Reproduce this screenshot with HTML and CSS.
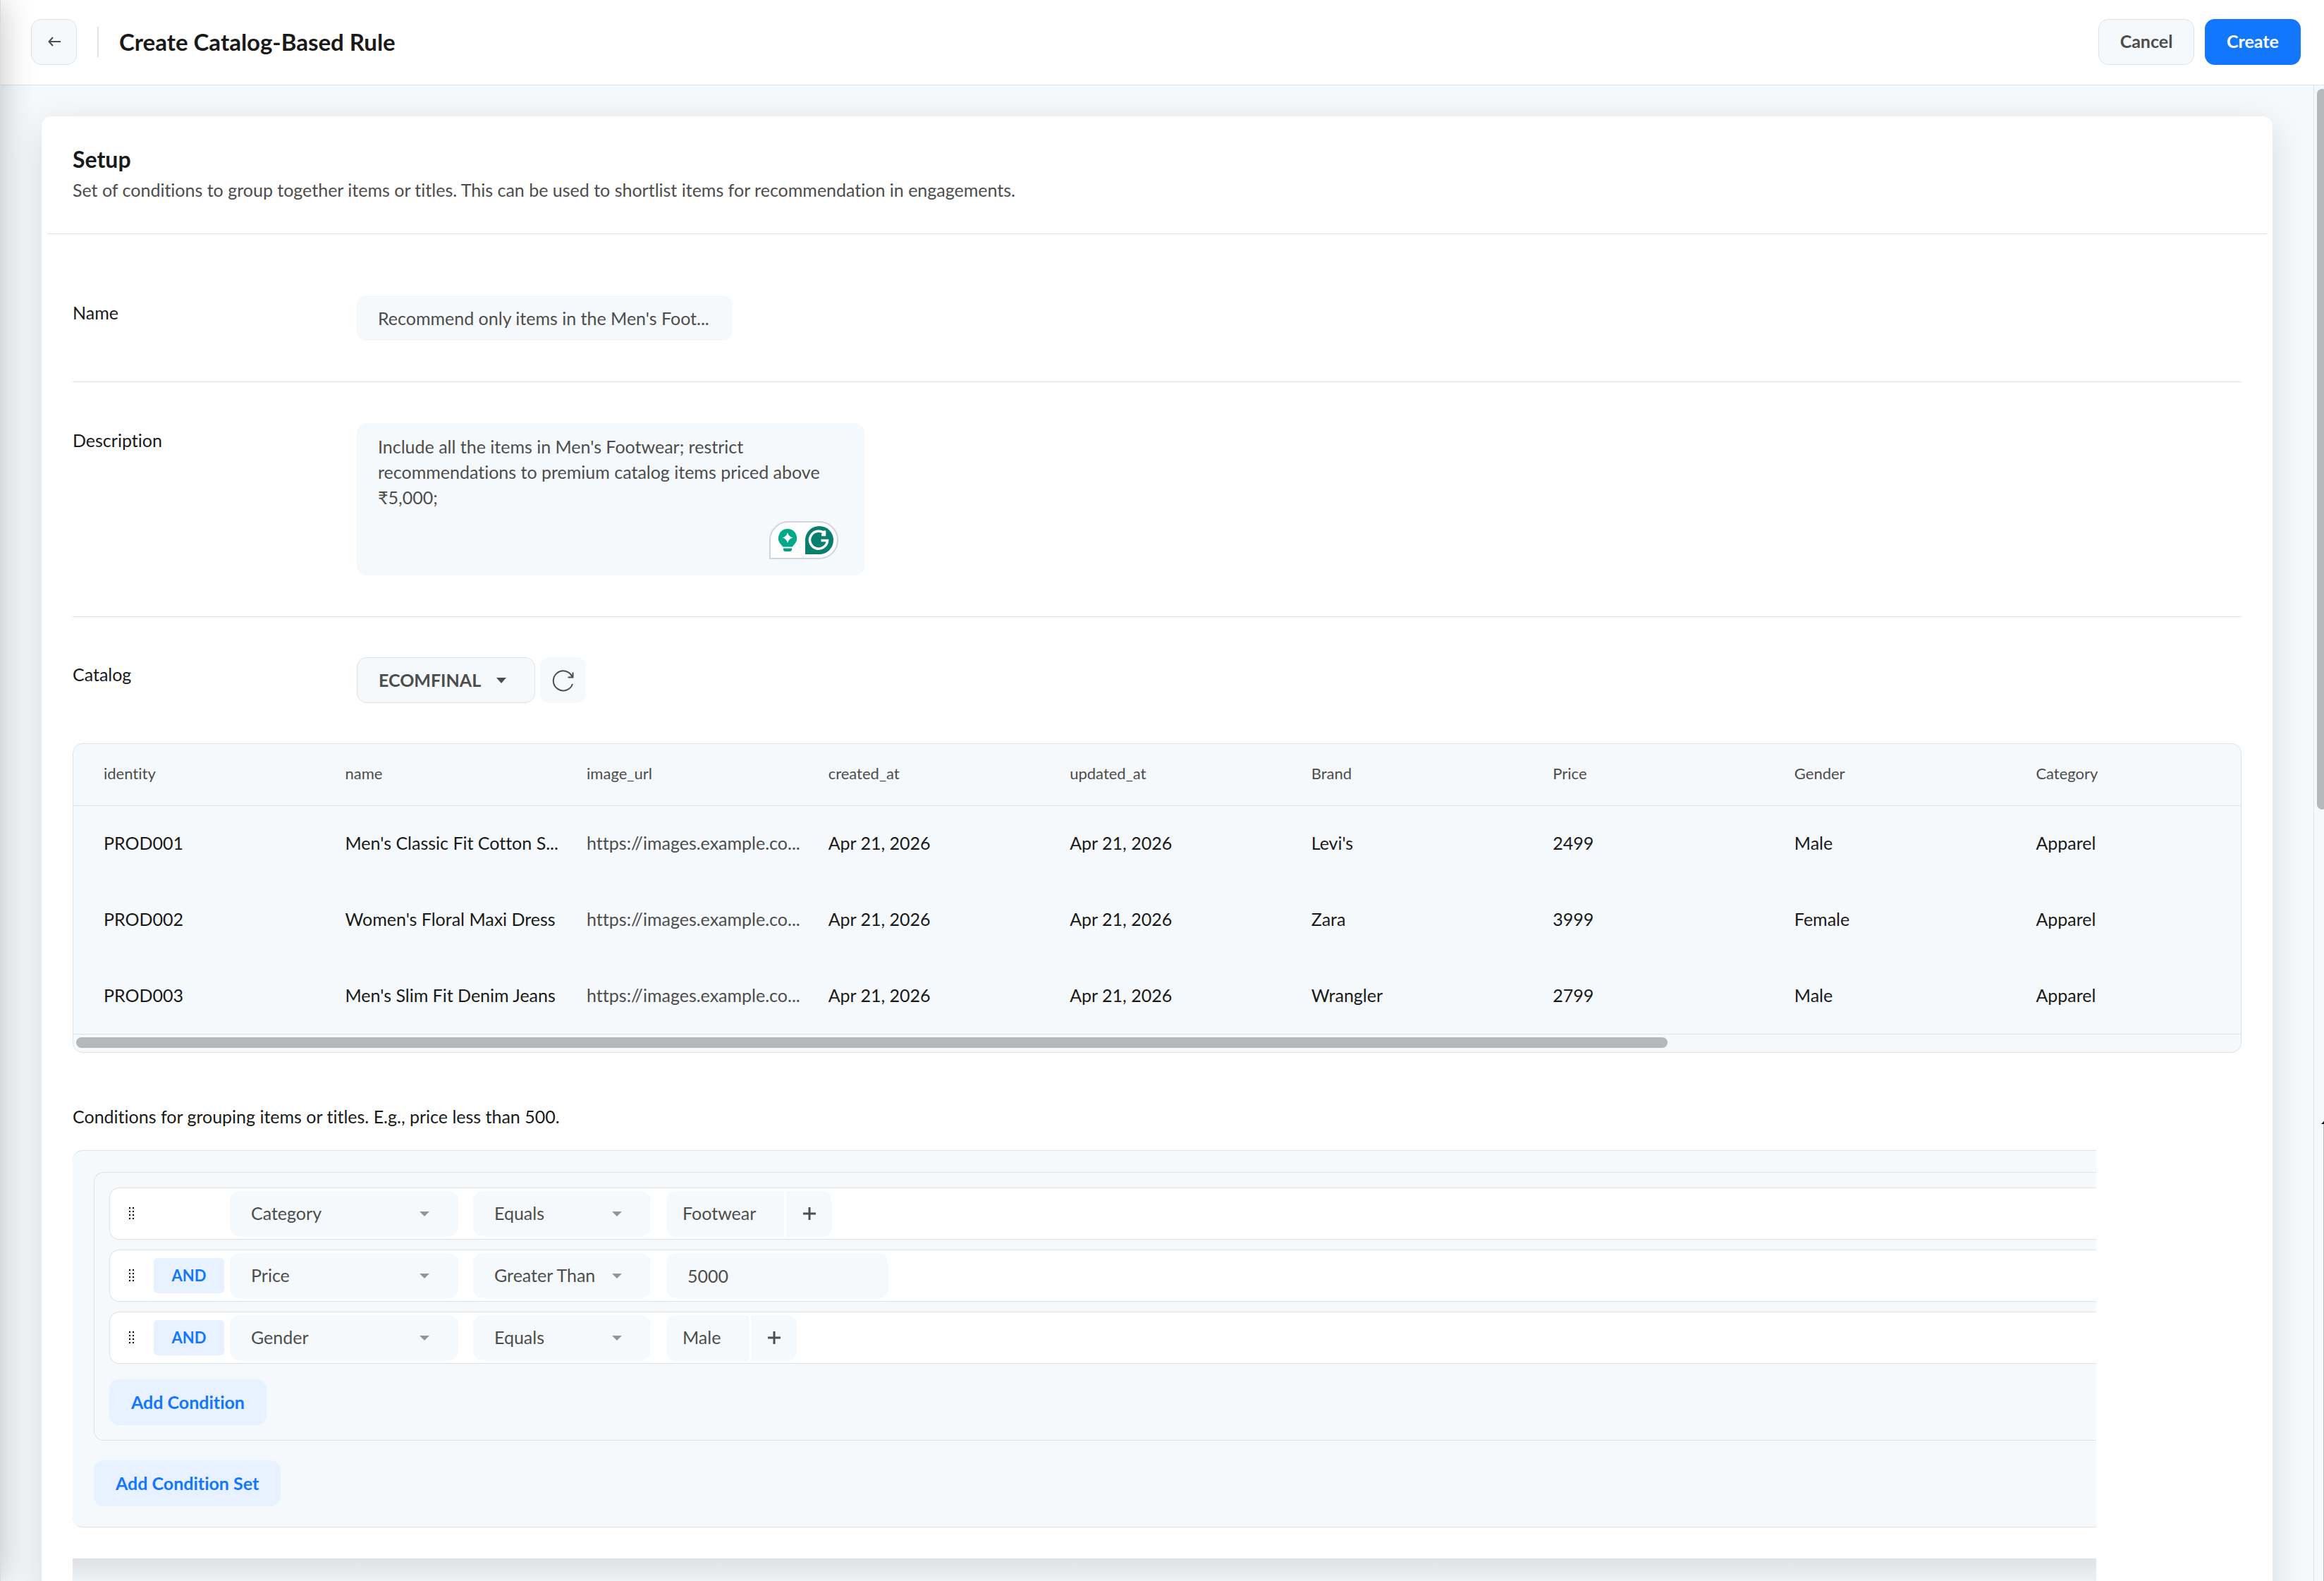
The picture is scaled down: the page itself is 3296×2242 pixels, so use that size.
FILE: index.html
```html
<!DOCTYPE html>
<html lang="en">
<head>
    <meta charset="UTF-8">
    <meta name="viewport" content="width=device-width, initial-scale=1.0">
    <title>Create Catalog-Based Rule</title>
    <link rel="stylesheet" href="styles.css">
</head>
<body>

    <header class="topbar">
        <button class="btn btn-icon btn-outline" type="button" aria-label="Back">
            <svg width="18" height="14" viewBox="0 0 18 14" fill="none" stroke="#4d4d4d" stroke-width="2"><path d="M18 7H1.500M7 1L1.500 7L7 13"/></svg>
        </button>
        <span class="topbar-divider"></span>
        <h1 class="topbar-title">Create Catalog-Based Rule</h1>
        <div class="topbar-actions">
            <button class="btn btn-outline" type="button">Cancel</button>
            <button class="btn btn-primary" type="button">Create</button>
        </div>
    </header>

    <div class="page">
        <main class="card">
            <div class="card-header">
                <h2 class="card-title">Setup</h2>
                <p class="card-subtitle">Set of conditions to group together items or titles. This can be used to shortlist items for recommendation in engagements.</p>
            </div>

            <div class="card-body">
                <div class="field">
                    <label class="field-label" for="rule-name">Name</label>
                    <input class="input name-input" id="rule-name" type="text" value="Recommend only items in the Men's Foot...">
                </div>

                <div class="field">
                    <label class="field-label" for="rule-description">Description</label>
                    <div class="textarea-wrap">
                        <textarea class="textarea" id="rule-description" spellcheck="false">Include all the items in Men's Footwear; restrict recommendations to premium catalog items priced above ₹5,000;</textarea>
                        <div class="assist-badge">
                            <svg width="28" height="34" viewBox="0 0 28 34">
                                <path fill="#00a88a" d="M14 1a13 13 0 0 0-9 22.400q1.500 1.600 2 3.100h14q.5-1.500 2-3.100A13 13 0 0 0 14 1z"/>
                                <path fill="#fff" d="M14 6q1.500 6 7.500 7.500Q15.500 15 14 21q-1.500-6-7.500-7.500Q12.500 12 14 6z"/>
                                <path fill="#0a9c80" d="M8 28.500h12v1.500q0 3-3 3h-6q-3 0-3-3z"/>
                            </svg>
                            <svg width="40" height="40" viewBox="0 0 40 40">
                                <path fill="#077f70" d="M20 0a20 20 0 0 1 0 40H0V20A20 20 0 0 1 20 0z"/>
                                <path fill="none" stroke="#fff" stroke-width="3.500" d="M28.500 11.500A12.500 12.500 0 1 0 31.500 20.500H22.500M27.500 6.500V12.500H23"/>
                            </svg>
                        </div>
                    </div>
                </div>

                <div class="field field-last">
                    <label class="field-label" for="catalog">Catalog</label>
                    <div class="catalog-controls">
                        <div class="select-wrap">
                            <select class="select catalog-select" id="catalog">
                                <option>ECOMFINAL</option>
                            </select>
                            <svg class="caret caret-dark" width="14" height="8" viewBox="0 0 14 8"><path d="M0 0h14L7 8z"/></svg>
                        </div>
                        <button class="btn btn-icon" type="button" aria-label="Refresh catalog">
                            <svg width="32" height="32" viewBox="0 0 32 32" fill="none" stroke="#4d4d4d" stroke-width="2"><path d="M29 21A14 14 0 1 1 28.500 10.500M29.500 4.500V11.500H22.500"/></svg>
                        </button>
                    </div>
                </div>

                <div class="catalog-table">
                    <div class="table-scroll">
                        <table class="table">
                            <thead>
                                <tr>
                                    <th>identity</th>
                                    <th>name</th>
                                    <th>image_url</th>
                                    <th>created_at</th>
                                    <th>updated_at</th>
                                    <th>Brand</th>
                                    <th>Price</th>
                                    <th>Gender</th>
                                    <th>Category</th>
                                </tr>
                            </thead>
                            <tbody>
                                <tr>
                                    <td>PROD001</td>
                                    <td>Men's Classic Fit Cotton S...</td>
                                    <td class="url">https://images.example.co...</td>
                                    <td>Apr 21, 2026</td>
                                    <td>Apr 21, 2026</td>
                                    <td>Levi's</td>
                                    <td>2499</td>
                                    <td>Male</td>
                                    <td>Apparel</td>
                                </tr>
                                <tr>
                                    <td>PROD002</td>
                                    <td>Women's Floral Maxi Dress</td>
                                    <td class="url">https://images.example.co...</td>
                                    <td>Apr 21, 2026</td>
                                    <td>Apr 21, 2026</td>
                                    <td>Zara</td>
                                    <td>3999</td>
                                    <td>Female</td>
                                    <td>Apparel</td>
                                </tr>
                                <tr>
                                    <td>PROD003</td>
                                    <td>Men's Slim Fit Denim Jeans</td>
                                    <td class="url">https://images.example.co...</td>
                                    <td>Apr 21, 2026</td>
                                    <td>Apr 21, 2026</td>
                                    <td>Wrangler</td>
                                    <td>2799</td>
                                    <td>Male</td>
                                    <td>Apparel</td>
                                </tr>
                            </tbody>
                        </table>
                    </div>
                    <div class="hscroll"><div class="hscroll-thumb"></div></div>
                </div>

                <p class="conditions-text">Conditions for grouping items or titles. E.g., price less than 500.</p>

                <div class="conditions">
                    <div class="condition-set">
                        <div class="condition">
                            <svg class="handle" width="8" height="18" viewBox="0 0 8 18"><path d="M0 0h2v2H0zM5 0h2v2H5zM0 5h2v2H0zM5 5h2v2H5zM0 10h2v2H0zM5 10h2v2H5zM0 15h2v2H0zM5 15h2v2H5z"/></svg>
                            <span></span>
                            <div class="select-wrap attribute">
                                <select class="select" aria-label="Attribute"><option>Category</option></select>
                                <svg class="caret" width="14" height="7" viewBox="0 0 14 7"><path d="M0 0h14L7 7z"/></svg>
                            </div>
                            <div class="select-wrap operator">
                                <select class="select" aria-label="Operator"><option>Equals</option></select>
                                <svg class="caret" width="14" height="7" viewBox="0 0 14 7"><path d="M0 0h14L7 7z"/></svg>
                            </div>
                            <div class="values">
                                <span class="value">Footwear</span>
                                <button class="add-value" type="button" aria-label="Add value">
                                    <svg width="18" height="18" viewBox="0 0 18 18"><path d="M7.500 0h3v7.500h7.500v3h-7.500v7.500h-3v-7.500H0v-3h7.500z"/></svg>
                                </button>
                            </div>
                        </div>

                        <div class="condition">
                            <svg class="handle" width="8" height="18" viewBox="0 0 8 18"><path d="M0 0h2v2H0zM5 0h2v2H5zM0 5h2v2H0zM5 5h2v2H5zM0 10h2v2H0zM5 10h2v2H5zM0 15h2v2H0zM5 15h2v2H5z"/></svg>
                            <button class="join" type="button">AND</button>
                            <div class="select-wrap attribute">
                                <select class="select" aria-label="Attribute"><option>Price</option></select>
                                <svg class="caret" width="14" height="7" viewBox="0 0 14 7"><path d="M0 0h14L7 7z"/></svg>
                            </div>
                            <div class="select-wrap operator">
                                <select class="select" aria-label="Operator"><option>Greater Than</option></select>
                                <svg class="caret" width="14" height="7" viewBox="0 0 14 7"><path d="M0 0h14L7 7z"/></svg>
                            </div>
                            <input class="input number-input" type="text" value="5000" aria-label="Value">
                        </div>

                        <div class="condition">
                            <svg class="handle" width="8" height="18" viewBox="0 0 8 18"><path d="M0 0h2v2H0zM5 0h2v2H5zM0 5h2v2H0zM5 5h2v2H5zM0 10h2v2H0zM5 10h2v2H5zM0 15h2v2H0zM5 15h2v2H5z"/></svg>
                            <button class="join" type="button">AND</button>
                            <div class="select-wrap attribute">
                                <select class="select" aria-label="Attribute"><option>Gender</option></select>
                                <svg class="caret" width="14" height="7" viewBox="0 0 14 7"><path d="M0 0h14L7 7z"/></svg>
                            </div>
                            <div class="select-wrap operator">
                                <select class="select" aria-label="Operator"><option>Equals</option></select>
                                <svg class="caret" width="14" height="7" viewBox="0 0 14 7"><path d="M0 0h14L7 7z"/></svg>
                            </div>
                            <div class="values">
                                <span class="value">Male</span>
                                <button class="add-value" type="button" aria-label="Add value">
                                    <svg width="18" height="18" viewBox="0 0 18 18"><path d="M7.500 0h3v7.500h7.500v3h-7.500v7.500h-3v-7.500H0v-3h7.500z"/></svg>
                                </button>
                            </div>
                        </div>

                        <button class="btn btn-light add-condition" type="button">Add Condition</button>
                    </div>

                    <button class="btn btn-light add-set" type="button">Add Condition Set</button>
                </div>

                <div class="next-section"></div>
            </div>
        </main>

        <div class="vscroll"><div class="vscroll-thumb"></div></div>
    </div>

    <!-- shadow of the side nav and the edge of the right drawer -->
    <div class="nav-shadow"></div>
    <div class="drawer-edge">
        <svg width="4" height="4" viewBox="0 0 4 4"><path d="M4 0v4H0z"/></svg>
    </div>

</body>
</html>
```
FILE: styles.css
```css
:root {
    --bg: #f5f9fc;
    --border: #dfe3e6;
    --text: #1a1a1a;
    --muted: #4d4d4d;
    --blue: #1277fc;
    --light-blue: #e7f1ff;
}

* {
    box-sizing: border-box;
}

body {
    margin: 0;
    height: 100vh;
    display: flex;
    flex-direction: column;
    overflow: hidden;
    background: var(--bg);
    color: var(--text);
    font-family: Lato, "Noto Sans", sans-serif;
    font-size: 25px;
    font-variant-ligatures: none;
    line-height: 36px;
}

h1, h2, p {
    margin: 0;
}

button, input, select, textarea {
    font: inherit;
    color: var(--muted);
}

svg {
    display: block;
}

/* Buttons */
.btn {
    height: 65px;
    padding: 0 30px 2px;
    border: 1px solid transparent;
    border-radius: 14px;
    background: var(--bg);
    font-weight: bold;
}

.btn-outline {
    border-color: var(--border);
}

.btn-primary {
    background: var(--blue);
    color: #fff;
}

.btn-light {
    background: var(--light-blue);
    color: var(--blue);
}

.btn-icon {
    display: flex;
    align-items: center;
    justify-content: center;
    width: 65px;
    padding: 0;
}

/* Top bar */
.topbar {
    flex: none;
    display: flex;
    align-items: center;
    height: 121px;
    padding: 0 33px 2px 44px;
    background: #fff;
    border-bottom: 1px solid var(--border);
}

.topbar-divider {
    width: 2px;
    height: 43px;
    margin: 0 29px;
    background: var(--border);
}

.topbar-title {
    font-size: 33px;
    line-height: 40px;
}

.topbar-actions {
    display: flex;
    gap: 15px;
    margin-left: auto;
}

.topbar-actions .btn {
    width: 136px;
    padding: 0 0 2px;
}

/* Page */
.page {
    flex: 1;
    min-height: 0;
    display: flex;
    overflow: hidden;
}

.card {
    flex: 1;
    min-width: 0;
    margin: 44px 58px 0 59px;
    height: max-content;
    background: #fff;
    border-radius: 14px;
    box-shadow: 0 14px 50px rgba(0, 0, 0, 0.13);
}

.card-header {
    margin: 0 8px;
    padding: 41px 36px 44px;
    border-bottom: 1px solid var(--border);
}

.card-title {
    margin-bottom: 5px;
    font-size: 32px;
    line-height: 40px;
}

.card-subtitle {
    color: var(--muted);
}

.card-body {
    padding: 29px 44px 0;
}

.vscroll {
    flex: none;
    width: 15px;
    border-left: 1px solid var(--border);
    padding: 5px 0 0 4px;
    overflow: hidden;
}

.vscroll-thumb {
    width: 15px;
    height: 1022px;
    border-radius: 8px;
    background: #b6b7b8;
}

/* Fields */
.field {
    display: grid;
    grid-template-columns: 403px 1fr;
    align-items: start;
    padding: 58px 0;
    border-bottom: 1px solid var(--border);
}

.field-last {
    padding: 57px 0;
    border-bottom: 0;
}

.field-label {
    padding-top: 6px;
}

.input, .textarea {
    border: 0;
    border-radius: 14px;
    background: var(--bg);
    padding: 0 30px;
}

.input {
    height: 64px;
}

.name-input {
    width: 533px;
}

.textarea-wrap {
    position: relative;
    width: 720px;
}

.textarea {
    display: block;
    width: 100%;
    height: 216px;
    padding: 15px 30px;
    resize: none;
}

.assist-badge {
    position: absolute;
    right: 37px;
    bottom: 23px;
    display: flex;
    align-items: center;
    justify-content: space-between;
    width: 98px;
    height: 54px;
    padding: 0 5px 0 10px;
    border: 2px solid #d0d4e0;
    border-radius: 27px 27px 27px 0;
    background: #fff;
}

/* Selects, the caret lies in the same grid cell */
.select-wrap {
    display: grid;
    align-items: center;
}

.select {
    grid-area: 1 / 1;
    appearance: none;
    width: 100%;
    height: 64px;
    padding: 0 30px 2px;
    border: 0;
    border-radius: 14px;
    background: var(--bg);
}

.caret {
    grid-area: 1 / 1;
    justify-self: end;
    margin-right: 41px;
    fill: #949799;
    pointer-events: none;
}

.caret-dark {
    fill: var(--muted);
}

.catalog-controls {
    display: flex;
    gap: 7px;
}

.catalog-select {
    width: 253px;
    height: 65px;
    border: 1px solid var(--border);
    font-weight: bold;
}

/* Catalog table */
.catalog-table {
    border: 1px solid var(--border);
    border-radius: 14px;
    background: var(--bg);
    overflow: hidden;
}

.table-scroll {
    overflow: hidden;
}

.table {
    width: 3083px;
    min-width: 100%;
    table-layout: fixed;
    border-collapse: collapse;
}

.table th, .table td {
    padding: 0 0 2px 43px;
    text-align: left;
    white-space: nowrap;
}

.table th {
    height: 87px;
    border-bottom: 1px solid var(--border);
    font-size: 22px;
    font-weight: normal;
    color: var(--muted);
}

.table td {
    height: 108px;
}

.table .url {
    color: var(--muted);
}

.hscroll {
    height: 26px;
    padding: 4px;
    border-top: 1px solid var(--border);
}

.hscroll-thumb {
    width: 73.6%;
    height: 15px;
    border-radius: 8px;
    background: #b6b7b8;
}

/* Conditions */
.conditions-text {
    margin: 72px 0 30px;
}

.conditions {
    margin-right: 206px;
    padding: 30px 0 29px 30px;
    border: 1px solid var(--border);
    border-width: 1px 0;
    border-radius: 14px 0 0 14px;
    background: var(--bg);
}

.condition-set {
    display: flex;
    flex-direction: column;
    gap: 14px;
    padding: 21px 0 21px 21px;
    border: 1px solid var(--border);
    border-right: 0;
    border-radius: 14px 0 0 14px;
}

.condition {
    display: grid;
    grid-template-columns: 35px 108px 345px 274px 1fr;
    align-items: center;
    height: 74px;
    padding-left: 27px;
    border: 1px solid var(--border);
    border-right: 0;
    border-radius: 14px 0 0 14px;
    background: #fff;
}

.join {
    width: 100px;
    height: 50px;
    padding: 0;
    border: 0;
    border-radius: 6px;
    background: var(--light-blue);
    color: var(--blue);
    font-size: 22px;
    font-weight: bold;
}

.attribute {
    width: 324px;
}

.operator {
    width: 252px;
}

.number-input {
    width: 315px;
}

.values {
    display: flex;
    gap: 3px;
}

.value {
    padding: 13px 40px 16px 23px;
    border-radius: 14px 0 0 14px;
    background: var(--bg);
    color: var(--muted);
}

.add-value {
    display: flex;
    align-items: center;
    justify-content: center;
    width: 65px;
    padding: 0;
    border: 0;
    border-radius: 0 14px 14px 0;
    background: var(--bg);
    fill: var(--muted);
}

.add-condition {
    align-self: flex-start;
    margin-top: 8px;
}

.add-set {
    display: block;
    margin-top: 28px;
}

.next-section {
    height: 120px;
    margin: 44px 206px 0 0;
    background: linear-gradient(#dfe1e3, #eff3f6 36px);
}

/* Overlays on the window edges */
.nav-shadow {
    position: fixed;
    top: 0;
    bottom: 0;
    left: -99px;
    width: 100px;
    background: #d9dcde;
    box-shadow: 0 0 50px rgba(0, 0, 0, 0.24);
    pointer-events: none;
}

.drawer-edge {
    position: fixed;
    top: 1590px;
    right: 0;
    bottom: 0;
    width: 4px;
    border-right: 1px solid #b6b7b8;
}
```
